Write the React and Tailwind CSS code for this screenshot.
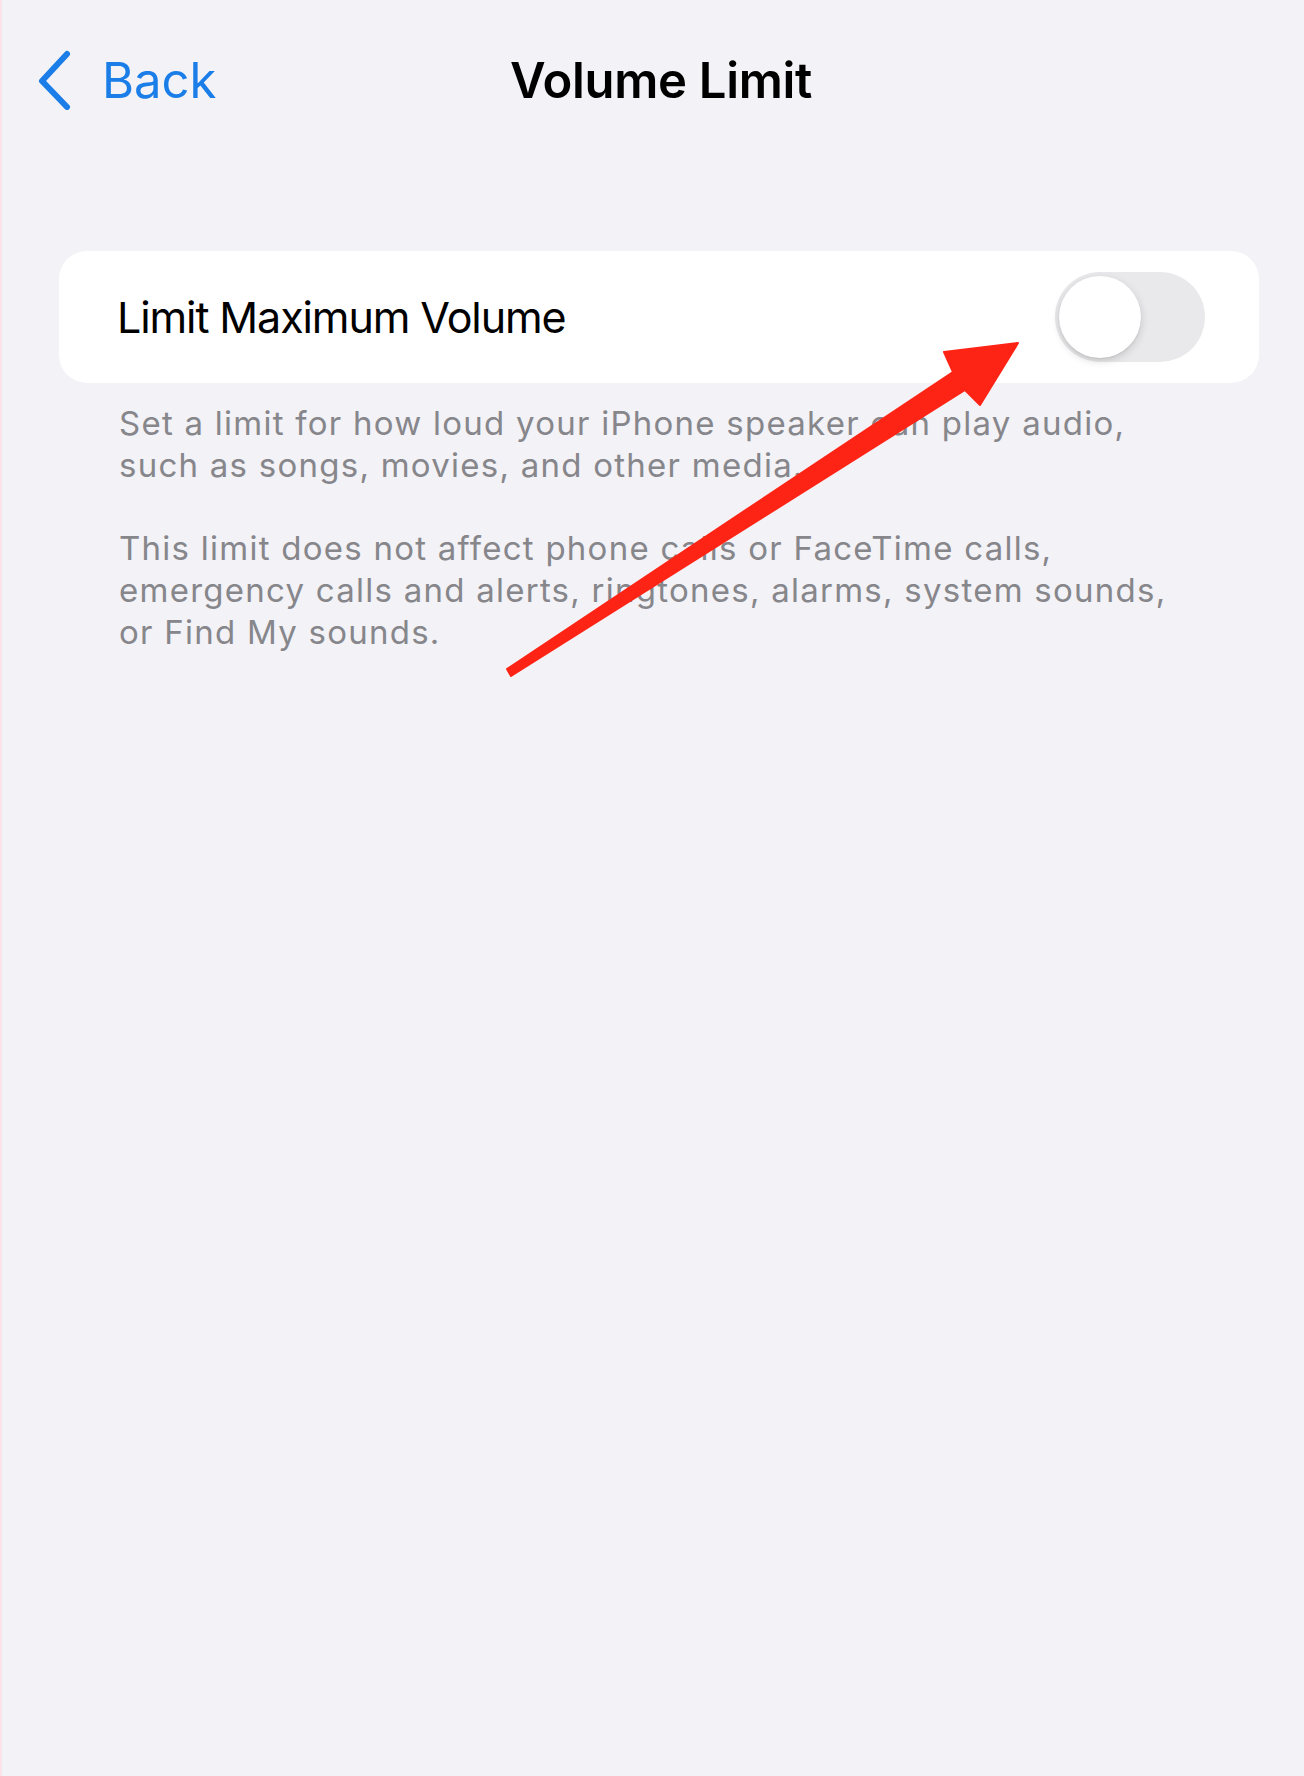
import React, { useState } from 'react'

function Chevron() {
  return (
    <svg width="40" height="60" viewBox="0 0 40 60" fill="none">
      <path d="M33 4 L8 31 L33 57" stroke="#1a7de8" strokeWidth="6" strokeLinecap="round" strokeLinejoin="round" />
    </svg>
  )
}

function Toggle({ on, onChange }) {
  return (
    <button
      onClick={() => onChange(!on)}
      className={`w-[150px] h-[90px] rounded-full p-[4px] flex items-center ${on ? 'bg-[#34c759] justify-end' : 'bg-[#e9e9eb] justify-start'}`}
    >
      <span className="block w-[82px] h-[82px] rounded-full bg-white shadow-[0_3px_8px_rgba(0,0,0,0.15),0_1px_2px_rgba(0,0,0,0.08)]" />
    </button>
  )
}

// red annotation arrow drawn over the screenshot
function Arrow() {
  return (
    <svg className="absolute left-0 top-0 pointer-events-none" width="1304" height="720" viewBox="0 0 1304 720">
      <polygon
        points="505,669 951,372 942,352 1016,343 978,405 963,390 509,676"
        fill="#fe2415"
        stroke="#fe2415"
        strokeWidth="2"
        strokeLinejoin="round"
      />
    </svg>
  )
}

export default function App() {
  const [limit, setLimit] = useState(false)

  return (
    <div className="relative min-h-[1776px] pt-[40px] bg-[#f2f2f7] border-l-2 border-[#fbe3ea] font-['Inter',sans-serif]">
      <div className="grid grid-cols-[1fr_auto_1fr] items-center h-[80px]">
        <div className="flex items-center gap-[28px] pl-[32px] text-[#1a7de8]">
          <Chevron />
          <span className="text-[49px] leading-none">Back</span>
        </div>
        <h1 className="ml-[16px] text-[49px] leading-none font-semibold text-black tracking-[-0.3px]">Volume Limit</h1>
        <div />
      </div>

      <div className="ml-[57px] mr-[45px] mt-[131px] h-[132px] bg-white rounded-[28px] flex items-center justify-between pl-[58px] pr-[54px]">
        <span className="text-[43px] text-black tracking-[-1.1px]">Limit Maximum Volume</span>
        <Toggle on={limit} onChange={setLimit} />
      </div>

      <div className="pl-[117px] pr-[40px] pt-[19px] text-[33px] leading-[42px] text-[#86868b] tracking-[1.25px]">
        <p>
          Set a limit for how loud your iPhone speaker can play audio,
          <br />
          such as songs, movies, and other media.
        </p>
        <p className="mt-[41px]">
          This limit does not affect phone calls or FaceTime calls,
          <br />
          emergency calls and alerts, ringtones, alarms, system sounds,
          <br />
          or Find My sounds.
        </p>
      </div>

      <Arrow />
    </div>
  )
}
